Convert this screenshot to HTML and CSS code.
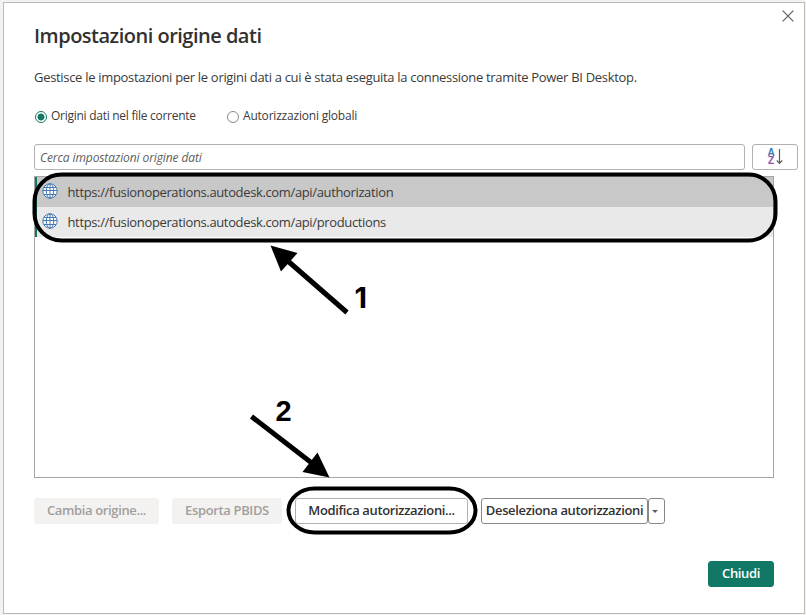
FILE: index.html
```html
<!DOCTYPE html>
<html lang="it">
<head>
<meta charset="utf-8">
<title>Impostazioni origine dati</title>
<link rel="stylesheet" href="styles.css">
</head>
<body>
<main class="dialog">
  <button class="close" aria-label="Chiudi finestra"><svg width="12" height="12" viewBox="0 0 12 12"><path d="M.7 .7 11.3 11.3M11.3 .7 .7 11.3"/></svg></button>
  <h1>Impostazioni origine dati</h1>
  <p class="intro">Gestisce le impostazioni per le origini dati a cui è stata eseguita la connessione tramite Power BI Desktop.</p>
  <div class="radios">
    <label class="radio radio-first"><span class="dot checked"></span><span class="r1">Origini dati nel file corrente</span></label>
    <label class="radio"><span class="dot"></span><span class="r2">Autorizzazioni globali</span></label>
  </div>
  <div class="search-row">
    <div class="search"><span>Cerca impostazioni origine dati</span></div>
    <button class="sort" aria-label="Ordina">
      <span class="az"><span class="a">A</span><span class="z">Z</span></span>
      <svg width="7" height="16" viewBox="0 0 7 16"><path d="M3.500 0V14M.8 11.500 3.500 14.400 6.200 11.500"/></svg>
    </button>
  </div>
  <div class="list">
    <div class="row selected"><svg class="globe" width="16" height="16" viewBox="0 0 16 16"><circle cx="8" cy="8" r="7.200"/><ellipse cx="8" cy="8" rx="3.700" ry="7.200"/><path d="M8 .8V15.200M.8 7.500H15.200M2 4.500H14M2 11.500H14"/></svg><span>https://fusionoperations.autodesk.com/api/authorization</span></div>
    <div class="row"><svg class="globe" width="16" height="16" viewBox="0 0 16 16"><circle cx="8" cy="8" r="7.200"/><ellipse cx="8" cy="8" rx="3.700" ry="7.200"/><path d="M8 .8V15.200M.8 7.500H15.200M2 4.500H14M2 11.500H14"/></svg><span>https://fusionoperations.autodesk.com/api/productions</span></div>
  </div>
  <div class="actions">
    <button class="btn disabled change">Cambia origine...</button>
    <button class="btn disabled export">Esporta PBIDS</button>
    <button class="btn edit">Modifica autorizzazioni...</button>
    <div class="split">
      <button class="btn clear">Deseleziona autorizzazioni</button>
      <button class="btn drop" aria-label="Altro"><svg width="6" height="3" viewBox="0 0 6 3"><path d="M0 0H6L3 3Z"/></svg></button>
    </div>
  </div>
  <div class="footer"><button class="btn primary">Chiudi</button></div>
</main>
<svg class="notes" width="806" height="615" viewBox="0 0 806 615">
  <rect x="34.500" y="174.500" width="741" height="66" rx="27"/>
  <rect x="288.500" y="488.500" width="187" height="44" rx="26" ry="22"/>
  <path class="shaft" d="M347 312.500 285 258.500"/>
  <path class="head" d="M270.500 245.500 297.500 253 281 271.500Z"/>
  <path class="shaft" d="M251.500 416.500 315 465.500"/>
  <path class="head" d="M329.500 477.500 317.500 452.500 302.500 472Z"/>
  <text class="one" x="354.500" y="307.500">1</text>
  <text x="275.500" y="421">2</text>
</svg>
</body>
</html>
```
FILE: styles.css
```css
* { box-sizing: border-box; }
body {
  margin: 0;
  width: 806px;
  height: 615px;
  padding: 2px 1px 1px 3px;
  overflow: hidden;
  background: #f3f2f1;
  color: #3b3a39;
  font: 13px "Open Sans", "Noto Sans", sans-serif;
}
button { font: inherit; margin: 0; padding: 0; background: #fff; border: 0; color: inherit; }
span, h1, p, .btn { white-space: nowrap; }
.dialog {
  position: relative;
  width: 802px;
  height: 612px;
  padding: 19px 0 0 30px;
  background: #fff;
  border: 1px solid #bebbb8;
}
.close { position: absolute; right: 10px; top: 7px; width: 12px; height: 12px; display: flex; }
.close svg, .sort svg { fill: none; stroke: #605e5c; stroke-width: 1.2; }
h1 { margin: 0; height: 28px; font-size: 20px; line-height: 28px; font-weight: 600; letter-spacing: -.5px; color: #323130; }
.intro { margin: 17px 0 0; height: 20px; line-height: 20px; letter-spacing: -.31px; }
.radios { display: flex; height: 18px; margin-top: 20px; font-size: 12px; line-height: 18px; }
.radio { display: flex; align-items: center; gap: 4px; }
.radio-first { width: 192px; }
.r1 { letter-spacing: -.27px; }
.r2 { letter-spacing: -.2px; }
.dot { width: 12px; height: 12px; margin-top: 1px; margin-left: 1px; border: 1px solid #8a8886; border-radius: 50%; }
.checked { border: 1.5px solid #117865; background: radial-gradient(circle, #117865 3.2px, #fff 3.8px); }
.search-row { display: flex; gap: 7px; margin-top: 19px; height: 26px; }
.search { width: 711px; border: 1px solid #b3b0ad; border-radius: 3px; padding-left: 5px; font-size: 12px; line-height: 25px; font-style: italic; letter-spacing: -.1px; color: #605e5c; }
.sort { width: 46px; border: 1px solid #b3b0ad; border-radius: 3px; display: flex; align-items: center; justify-content: center; gap: 1px; }
.az { display: flex; flex-direction: column; width: 7px; font: bold 10px "Liberation Sans", sans-serif; line-height: 8px; }
.a { color: #3f78b6; }
.z { color: #8e52b0; }
.list { width: 740px; height: 302px; margin-top: 6px; border: 1px solid #a6a6a6; }
.row { display: flex; align-items: center; gap: 9px; height: 30px; padding-left: 5.5px; border-left: 2px solid #117865; background: #e9e9e9; letter-spacing: -.36px; }
.selected { background: #c8c8c8; }
.globe { fill: #fff; stroke: #4478b0; stroke-width: 1; margin-top: -2px; margin-left: -.5px; margin-right: .5px; }
.globe ellipse { fill: none; }
.actions { display: flex; gap: 13px; margin-top: 20px; height: 26px; }
.btn { display: flex; align-items: center; justify-content: center; height: 26px; padding-bottom: 2px; border: 1px solid #b3b0ad; border-radius: 3px; font-size: 13px; line-height: 22px; font-weight: 600; letter-spacing: -.36px; color: #323130; }
.disabled { background: #f3f2f1; border-color: #f3f2f1; color: #a19f9d; }
.change { width: 125px; }
.export { width: 110px; }
.edit { width: 173px; }
.split { display: flex; }
.clear { width: 167px; border-color: #8a8886; }
.drop { width: 17px; padding: 0 3px 0 0; border-color: #8a8886; }
.drop svg { fill: #605e5c; }
.footer { display: flex; justify-content: flex-end; width: 740px; margin-top: 37px; }
.primary { width: 66px; background: #117865; border-color: #117865; color: #fff; }
.notes { position: absolute; left: 0; top: 0; pointer-events: none; }
.notes rect { fill: none; stroke: #000; stroke-width: 4; }
.shaft { stroke: #000; stroke-width: 5; }
.notes text { font: bold 29px "Liberation Sans", sans-serif; }
.notes .one { font-family: Inter, sans-serif; }
```
